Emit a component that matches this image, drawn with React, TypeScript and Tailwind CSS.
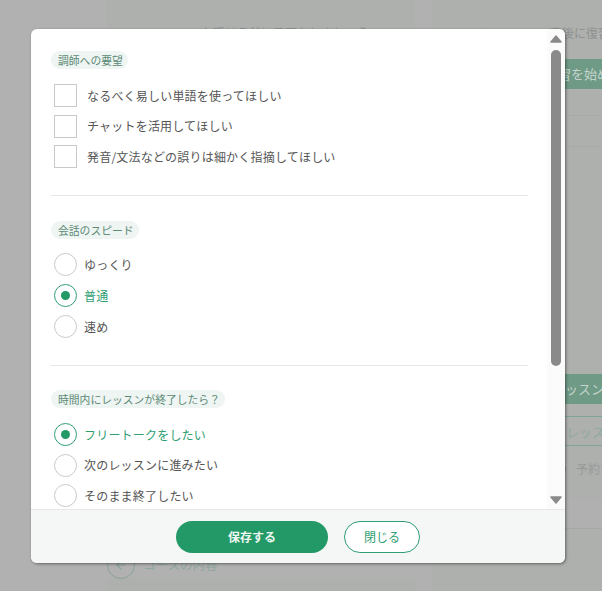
import { ArrowLeft } from "lucide-react";

const font = "font-['Noto_Sans_CJK_JP','Noto_Sans',sans-serif]";

function SectionLabel({ children }: { children: string }) {
  return (
    <div className="flex">
      <span className="h-[18px] rounded-full bg-[#eef5f3] pl-[7px] pr-[5px] text-[10.8px] leading-[18px] text-[#5d8a75]">
        {children}
      </span>
    </div>
  );
}

function CheckRow({ label }: { label: string }) {
  return (
    <label className="ml-[3px] flex h-[23px] items-center gap-[10px]">
      <span className="h-[23px] w-[23px] shrink-0 border border-[#c9c9c9] bg-white" />
      <span className="text-[12px] tracking-[0.2px] text-[#555]">{label}</span>
    </label>
  );
}

function RadioRow({ label, checked }: { label: string; checked?: boolean }) {
  return (
    <label className="ml-[3px] flex h-[23px] items-center gap-[7px]">
      <span
        className={
          checked
            ? "flex h-[23px] w-[23px] shrink-0 items-center justify-center rounded-full border border-[#2f9e73] bg-white"
            : "flex h-[23px] w-[23px] shrink-0 items-center justify-center rounded-full border border-[#c9c9c9] bg-white"
        }
      >
        {checked && <span className="h-[9px] w-[9px] rounded-full bg-[#229966]" />}
      </span>
      <span
        className={
          checked ? "text-[12px] tracking-[0.2px] text-[#2f9e73]" : "text-[12px] tracking-[0.2px] text-[#555]"
        }
      >
        {label}
      </span>
    </label>
  );
}

function Backdrop() {
  return (
    <div className="flex h-[591px] w-[602px] gap-[17px] overflow-hidden bg-[#b1b1b1] pl-[107px]">
      {/* left column */}
      <div className="flex w-[308px] shrink-0 flex-col bg-[#aeb0ae]">
        <div className="mt-[24px] pl-[46px] text-[12px] leading-[18px] text-[#8f918f]">
          レッスンを受ける前に予習をしましょう
        </div>
        <div className="mt-auto mb-[12px] flex items-center gap-[8px] bg-[#b1b1b1]">
          <span className="flex h-[28px] w-[28px] items-center justify-center rounded-full border border-[#86a395] text-[#86a395]">
            <ArrowLeft size={14} strokeWidth={2} />
          </span>
          <span className="text-[12.5px] text-[#8fa89c]">コースの内容</span>
        </div>
      </div>
      {/* right column */}
      <div className="flex w-[330px] shrink-0 flex-col bg-[#aeb0ae]">
        <div className="mt-[24px] pl-[46px] text-[12px] leading-[18px] text-[#8f918f]">
          このレッスン直後に復習をしましょう
        </div>
        <div className="mt-[17px] h-[30px] bg-[#6f9a85] pl-[113px] text-[13px] leading-[30px] text-[#c4d4cc]">
          復習を始める
        </div>
        <div className="mt-[26px] h-[32px] border-y border-[#a8aaa8]" />
        <div className="mt-[227px] h-[30px] bg-[#6f9a85] pl-[94px] text-[13px] leading-[30px] text-[#c4d4cc]">
          次のレッスンを予約
        </div>
        <div className="mt-[12px] h-[30px] border-y border-[#7fa594] pl-[108px] text-[13px] leading-[29px] text-[#8fa89c]">
          前のレッスン
        </div>
        <div className="mt-[14px] flex items-center gap-[10px] pl-[122px] text-[12px] leading-[18px] text-[#969896]">
          <span className="h-[12px] w-[12px] rounded-full border border-[#969896]" />
          <span>予約する</span>
        </div>
        <div className="mt-[21px] h-[30px] border-b border-[#a6a8a6] bg-[#b0b0b0]" />
      </div>
    </div>
  );
}

function Triangle({ down }: { down?: boolean }) {
  return (
    <svg width="12" height="8" viewBox="0 0 12 8" className="shrink-0">
      <polygon
        points={down ? "1,1 11,1 6,7" : "6,1 11,7 1,7"}
        fill="#8a8a8a"
        stroke="#8a8a8a"
        strokeWidth="1.5"
        strokeLinejoin="round"
      />
    </svg>
  );
}

export default function App() {
  return (
    <div className={`relative h-[591px] w-[602px] overflow-hidden ${font}`}>
      <Backdrop />

      {/* modal */}
      <div className="absolute left-[31px] top-[29px] flex h-[534px] w-[534px] flex-col overflow-hidden rounded-[6px] bg-white shadow-[1px_1px_3px_rgba(0,0,0,0.45)]">
        <div className="flex min-h-0 flex-1">
          <div className="min-w-0 flex-1 overflow-hidden pl-[20px] pr-[19px] pt-[22px]">
            <SectionLabel>調師への要望</SectionLabel>
            <div className="mt-[15px] flex flex-col gap-[7.5px]">
              <CheckRow label="なるべく易しい単語を使ってほしい" />
              <CheckRow label="チャットを活用してほしい" />
              <CheckRow label="発音/文法などの誤りは細かく指摘してほしい" />
            </div>
            <div className="mt-[27px] border-t border-[#e6e6e6]" />

            <div className="mt-[25px]">
              <SectionLabel>会話のスピード</SectionLabel>
            </div>
            <div className="mt-[14px] flex flex-col gap-[8px]">
              <RadioRow label="ゆっくり" />
              <RadioRow label="普通" checked />
              <RadioRow label="速め" />
            </div>
            <div className="mt-[27px] border-t border-[#e6e6e6]" />

            <div className="mt-[24px]">
              <SectionLabel>時間内にレッスンが終了したら？</SectionLabel>
            </div>
            <div className="mt-[15px] flex flex-col gap-[7.5px]">
              <RadioRow label="フリートークをしたい" checked />
              <RadioRow label="次のレッスンに進みたい" />
              <RadioRow label="そのまま終了したい" />
            </div>
          </div>

          {/* scrollbar */}
          <div className="flex w-[18px] shrink-0 flex-col items-center bg-[#fbfbfb] pb-[5px] pt-[6px]">
            <Triangle />
            <div className="mt-[7px] h-[316px] w-[10px] rounded-full bg-[#8a8a8a]" />
            <div className="mt-auto">
              <Triangle down />
            </div>
          </div>
        </div>

        {/* footer */}
        <div className="flex h-[54px] shrink-0 items-center justify-center gap-[16px] border-t border-[#e8e8e8] bg-[#f5f7f6] pt-[1px]">
          <button className="h-[32px] w-[152px] rounded-full bg-[#229966] text-[12px] font-bold text-[#eef7f2]">
            保存する
          </button>
          <button className="h-[32px] w-[76px] rounded-full border border-[#2f9e73] bg-white text-[12px] text-[#2f9e73]">
            閉じる
          </button>
        </div>
      </div>
    </div>
  );
}
